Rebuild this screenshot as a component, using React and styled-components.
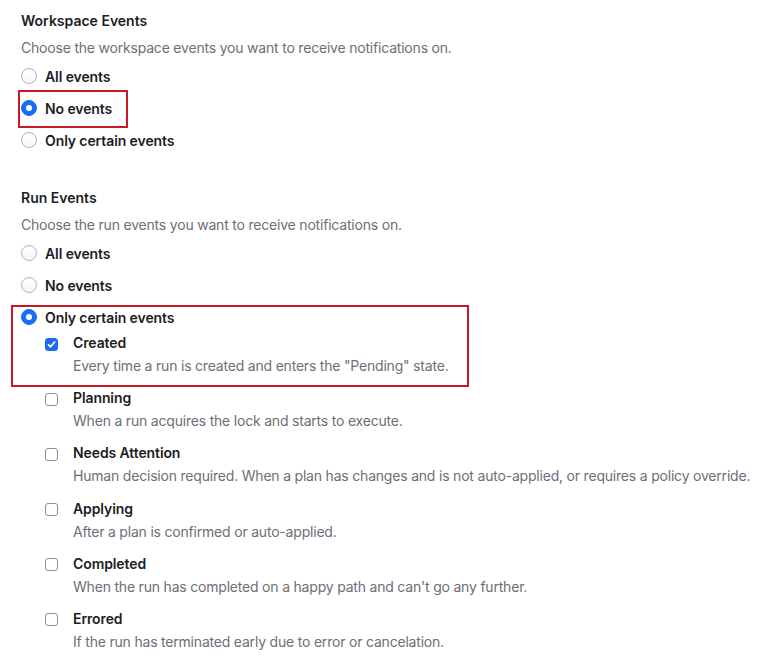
import React from "react";
import styled, { createGlobalStyle } from "styled-components";

const Global = createGlobalStyle`
  html, body { margin: 0; padding: 0; background: #ffffff; }
  body { font-family: Inter, "Noto Sans", "Liberation Sans", sans-serif; color: #1d1d1f; -webkit-font-smoothing: antialiased; }
  * { box-sizing: border-box; }
`;

const Page = styled.div`
  display: flex;
  flex-direction: column;
  gap: 32px;
  padding: 11px 0 0 21px;
`;

const Section = styled.section`
  display: flex;
  flex-direction: column;
`;

const Heading = styled.h3`
  margin: 0;
  font-size: 14px;
  line-height: 20px;
  font-weight: 600;
  color: #1d1d1f;
`;

const Description = styled.p`
  margin: 7px 0 2px;
  font-size: 14px;
  line-height: 20px;
  letter-spacing: -0.2px;
  color: #6e6e78;
`;

const Highlight = styled.div`
  position: relative;
  align-self: ${(p) => (p.$fit ? "flex-start" : "stretch")};
  &::after {
    content: "";
    position: absolute;
    left: ${(p) => p.$left}px;
    top: ${(p) => p.$top}px;
    width: ${(p) => p.$w}px;
    height: ${(p) => p.$h}px;
    border: 2px solid #c41a22;
    pointer-events: none;
  }
`;

const RadioRow = styled.label`
  display: flex;
  align-items: center;
  gap: 8px;
  height: 32px;
  font-size: 14px;
  font-weight: 600;
  letter-spacing: -0.1px;
  color: #1d1d1f;
`;

const Radio = styled.span`
  width: 16px;
  height: 16px;
  border-radius: 50%;
  flex: none;
  display: flex;
  align-items: center;
  justify-content: center;
  background: ${(p) => (p.$checked ? "#1a6cf5" : "linear-gradient(#ffffff, #f7f7f7)")};
  border: 1px solid ${(p) => (p.$checked ? "#1a6cf5" : "#b3b3b3")};
  &::before {
    content: "";
    width: 6px;
    height: 6px;
    border-radius: 50%;
    background: #ffffff;
    display: ${(p) => (p.$checked ? "block" : "none")};
  }
`;

const CheckList = styled.div`
  display: flex;
  flex-direction: column;
  gap: 12.2px;
  padding-left: 24px;
  margin-top: ${(p) => p.$mt || 0}px;
`;

const CheckItem = styled.div`
  display: grid;
  grid-template-columns: 13px auto;
  column-gap: 15px;
  row-gap: 3px;
  align-items: center;
`;

const CheckLabel = styled.span`
  font-size: 14px;
  line-height: 20px;
  font-weight: 600;
  letter-spacing: -0.1px;
  color: #1d1d1f;
`;

const CheckDesc = styled.span`
  grid-column: 2;
  font-size: 14px;
  line-height: 20px;
  letter-spacing: -0.2px;
  color: #6e6e78;
  white-space: nowrap;
`;

const Box = styled.span`
  width: 13px;
  height: 13px;
  border-radius: 3px;
  margin-top: 2px;
  display: flex;
  align-items: center;
  justify-content: center;
  background: ${(p) => (p.$checked ? "#1a6cf5" : "#ffffff")};
  border: 1px solid ${(p) => (p.$checked ? "#1a6cf5" : "#8f8f8f")};
`;

const Check = () => (
  <svg width="9" height="9" viewBox="0 0 9 9" fill="none">
    <path d="M1.5 4.8 L3.6 6.8 L7.6 2" stroke="#ffffff" strokeWidth="1.7" strokeLinecap="round" strokeLinejoin="round" />
  </svg>
);

const RadioOption = ({ label, checked }) => (
  <RadioRow>
    <Radio $checked={checked} />
    {label}
  </RadioRow>
);

const CheckOption = ({ label, desc, checked }) => (
  <CheckItem>
    <Box $checked={checked}>{checked && <Check />}</Box>
    <CheckLabel>{label}</CheckLabel>
    <CheckDesc>{desc}</CheckDesc>
  </CheckItem>
);

const runEvents = [
  ["Planning", "When a run acquires the lock and starts to execute."],
  ["Needs Attention", "Human decision required. When a plan has changes and is not auto-applied, or requires a policy override."],
  ["Applying", "After a plan is confirmed or auto-applied."],
  ["Completed", "When the run has completed on a happy path and can't go any further."],
  ["Errored", "If the run has terminated early due to error or cancelation."],
];

export default function App() {
  return (
    <>
      <Global />
      <Page>
        <Section>
          <Heading>Workspace Events</Heading>
          <Description>Choose the workspace events you want to receive notifications on.</Description>
          <RadioOption label="All events" />
          <Highlight $fit $left={-3} $top={-2} $w={106} $h={34}>
            <RadioOption label="No events" checked />
          </Highlight>
          <RadioOption label="Only certain events" />
        </Section>
        <Section>
          <Heading>Run Events</Heading>
          <Description>Choose the run events you want to receive notifications on.</Description>
          <RadioOption label="All events" />
          <RadioOption label="No events" />
          <Highlight $left={-10} $top={4} $w={454} $h={78}>
            <RadioOption label="Only certain events" checked />
            <CheckList>
              <CheckOption label="Created" desc={'Every time a run is created and enters the "Pending" state.'} checked />
            </CheckList>
          </Highlight>
          <CheckList $mt={12.2}>
            {runEvents.map(([l, d]) => (
              <CheckOption key={l} label={l} desc={d} />
            ))}
          </CheckList>
        </Section>
      </Page>
    </>
  );
}
